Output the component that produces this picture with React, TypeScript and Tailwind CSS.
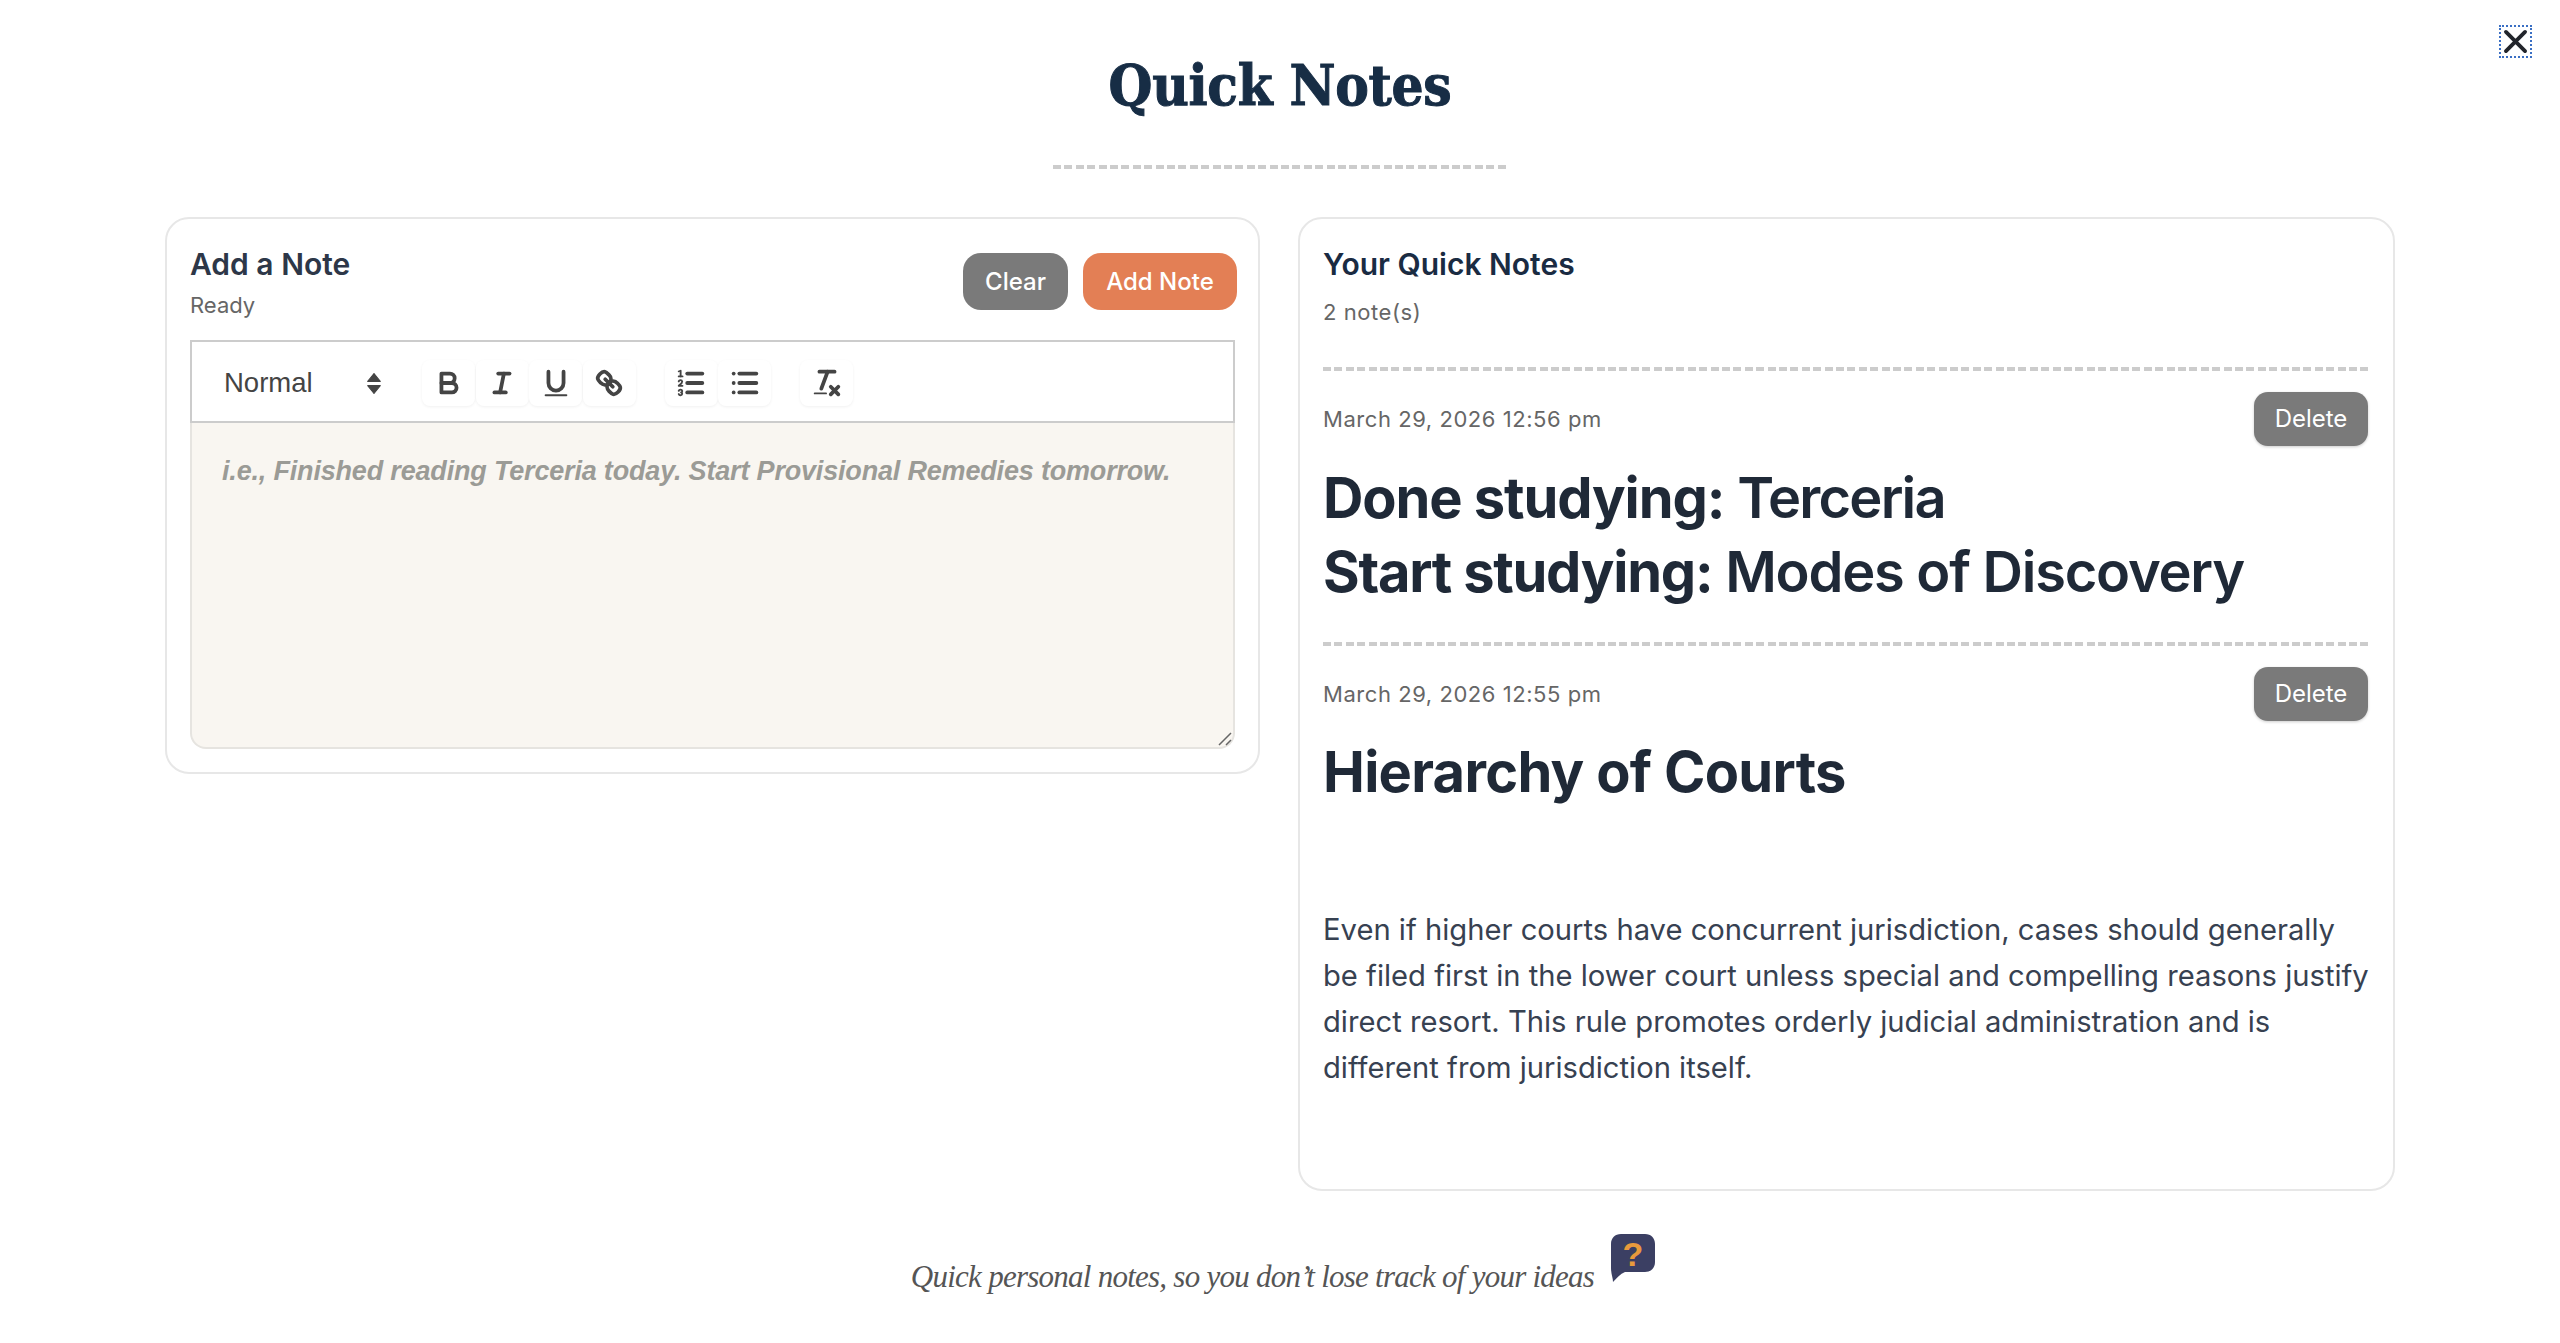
import React from "react";

const S = "fill-none stroke-[#444] stroke-2 [stroke-linecap:round] [stroke-linejoin:round]";
const T = "fill-none stroke-[#444] stroke-1 [stroke-linecap:round] [stroke-linejoin:round]";
const F = "fill-[#444]";

function Tool({ children }: { children: React.ReactNode }) {
  return (
    <button className="flex h-[46px] w-[53px] items-center justify-center rounded-lg bg-white shadow-[0_1px_3px_rgba(0,0,0,0.06)]">
      <svg viewBox="0 0 18 18" className="h-[34px] w-[34px]">{children}</svg>
    </button>
  );
}

function Dashes({ className }: { className?: string }) {
  return <div className={"h-[4px] bg-[repeating-linear-gradient(90deg,#cccccc_0,#cccccc_8px,transparent_8px,transparent_11.4px)] " + (className ?? "")} />;
}

function NoteHead({ date }: { date: string }) {
  return (
    <div className="flex items-center justify-between pr-[3px]">
      <span className="text-[22px] leading-none tracking-[0.55px] text-[#666]">{date}</span>
      <button className="h-[54px] w-[114px] rounded-[14px] bg-[#7a7a7a] text-[24px] text-white shadow-[0_1px_3px_rgba(0,0,0,0.2)]">Delete</button>
    </div>
  );
}

export default function App() {
  return (
    <div className="relative min-h-[1343px] bg-white px-[165px] pt-[52px] font-['Inter',sans-serif]">
      <button className="absolute left-[2499px] top-[25px] flex h-[33px] w-[33px] items-center justify-center border-2 border-dotted border-[#3a6fc4]">
        <svg viewBox="0 0 24 24" className="h-[27px] w-[27px]"><path d="M3.5 3.5 20.5 20.5M20.5 3.5 3.5 20.5" className="fill-none stroke-[#22252b] stroke-[3.4] [stroke-linecap:round]" /></svg>
      </button>

      <h1 className="text-center font-['DejaVu_Serif_Condensed','DejaVu_Serif',serif] text-[56px] font-bold leading-[67px] tracking-[-0.3px] text-[#172d45] [-webkit-text-stroke:1px_#172d45]">Quick Notes</h1>
      <Dashes className="mx-auto mt-[46px] w-[455px]" />

      <div className="mt-[48px] grid grid-cols-[1095px_1097px] items-start gap-[38px]">
        {/* Add a note */}
        <section className="rounded-[24px] border-2 border-[#e7e7e7] px-[23px] pb-[23px] pt-[27px]">
          <div className="flex h-[94px] items-start justify-between">
            <div className="pt-[1px]">
              <h2 className="text-[30px] font-semibold leading-[35px] text-[#2d3748]">Add a Note</h2>
              <p className="mt-[10px] text-[22px] leading-[27px] text-[#666]">Ready</p>
            </div>
            <div className="-mr-[2px] mt-[7px] flex gap-[15px]">
              <button className="h-[57px] w-[105px] rounded-[18px] bg-[#7a7a7a] text-[24px] font-medium text-white">Clear</button>
              <button className="h-[57px] w-[154px] rounded-[18px] bg-[#e37f55] text-[24px] font-medium text-white">Add Note</button>
            </div>
          </div>

          <div className="flex h-[83px] items-center border-2 border-[#cccccc] pt-[3px] font-['Liberation_Sans',sans-serif]">
            <div className="flex w-[230px] items-center justify-between pl-[32px] pr-[41px] text-[27.5px] text-[#444]">
              <span>Normal</span>
              <svg viewBox="0 0 13 20" className="h-[21px] w-[14px]"><path d="M6.5 0.5 12.5 8H0.5ZM6.5 19.5 0.5 12H12.5Z" className="fill-[#444] stroke-[#444] [stroke-linejoin:round]" /></svg>
            </div>
            <div className="flex gap-[0.5px]">
              <Tool>
                <path className={S} d="M5,4H9.5A2.5,2.5,0,0,1,12,6.5v0A2.5,2.5,0,0,1,9.5,9H5A0,0,0,0,1,5,9V4A0,0,0,0,1,5,4Z" />
                <path className={S} d="M5,9h5.5A2.5,2.5,0,0,1,13,11.5v0A2.5,2.5,0,0,1,10.5,14H5a0,0,0,0,1,0,0V9A0,0,0,0,1,5,9Z" />
              </Tool>
              <Tool>
                <line className={S} x1="7" x2="13" y1="4" y2="4" />
                <line className={S} x1="5" x2="11" y1="14" y2="14" />
                <line className={S} x1="8" x2="10" y1="14" y2="4" />
              </Tool>
              <Tool>
                <path className={S} d="M5,3V9a4.012,4.012,0,0,0,4,4H9a4.012,4.012,0,0,0,4-4V3" />
                <rect className={F} height="1" rx="0.5" ry="0.5" width="12" x="3" y="15" />
              </Tool>
              <Tool>
                <line className={S} x1="7" x2="11" y1="7" y2="11" />
                <path className={S} d="M8.9,4.577a3.476,3.476,0,0,1,.36,4.679A3.476,3.476,0,0,1,4.577,8.9C3.185,7.5,2.035,6.4,4.217,4.217S7.5,3.185,8.9,4.577Z" />
                <path className={S} d="M13.423,9.1a3.476,3.476,0,0,0-4.679-.36,3.476,3.476,0,0,0,.36,4.679c1.392,1.392,2.5,2.542,4.679.36S14.815,10.5,13.423,9.1Z" />
              </Tool>
            </div>
            <div className="ml-[29px] flex gap-[0.5px]">
              <Tool>
                <line className={S} x1="7" x2="15" y1="4" y2="4" />
                <line className={S} x1="7" x2="15" y1="9" y2="9" />
                <line className={S} x1="7" x2="15" y1="14" y2="14" />
                <line className={T} x1="2.5" x2="4.5" y1="5.5" y2="5.5" />
                <path className={F} d="M3.5,6A0.5,0.5,0,0,1,3,5.5V3.085l-0.276.138A0.5,0.5,0,0,1,2.053,3c-0.124-.247-0.023-0.324.224-0.447l1-.5A0.5,0.5,0,0,1,4,2.5v3A0.5,0.5,0,0,1,3.5,6Z" />
                <path className={T} d="M4.5,10.5h-2c0-.234,1.85-1.076,1.85-2.234A0.959,0.959,0,0,0,2.5,8.156" />
                <path className={T} d="M2.5,14.846a0.959,0.959,0,0,0,1.85-.109A0.7,0.7,0,0,0,3.75,14a0.688,0.688,0,0,0,.6-0.736,0.959,0.959,0,0,0-1.85-.109" />
              </Tool>
              <Tool>
                <line className={S} x1="6" x2="15" y1="4" y2="4" />
                <line className={S} x1="6" x2="15" y1="9" y2="9" />
                <line className={S} x1="6" x2="15" y1="14" y2="14" />
                <line className={S} x1="3" x2="3" y1="4" y2="4" />
                <line className={S} x1="3" x2="3" y1="9" y2="9" />
                <line className={S} x1="3" x2="3" y1="14" y2="14" />
              </Tool>
            </div>
            <div className="ml-[29px]">
              <Tool>
                <line className={S} x1="5" x2="13" y1="3" y2="3" />
                <line className={S} x1="6" x2="9.35" y1="12" y2="3" />
                <line className={S} x1="11" x2="15" y1="11" y2="15" />
                <line className={S} x1="15" x2="11" y1="11" y2="15" />
                <rect className={F} height="1" rx="0.5" ry="0.5" width="7" x="2" y="14" />
              </Tool>
            </div>
          </div>

          <div className="relative h-[326px] rounded-b-[16px] border-2 border-t-0 border-[#e6e4e0] bg-[#f9f6f1] px-[30px] pt-[30px]">
            <p className="font-['Liberation_Sans',sans-serif] text-[27px] font-bold italic leading-[36px] tracking-[-0.18px] text-[#9b9b96]">i.e., Finished reading Terceria today. Start Provisional Remedies tomorrow.</p>
            <svg viewBox="0 0 14 14" className="absolute bottom-[1px] right-[1px] h-[14px] w-[14px]"><path d="M1 13 13 1M8 13l5-5" className="fill-none stroke-[#666] stroke-[1.5]" /></svg>
          </div>
        </section>

        {/* Notes */}
        <section className="h-[974px] rounded-[24px] border-2 border-[#e7e7e7] pl-[23px] pr-[22px] pt-[28px]">
          <h2 className="text-[30px] font-semibold leading-[35px] text-[#1a2b42]">Your Quick Notes</h2>
          <p className="mt-[17px] text-[22px] leading-[27px] tracking-[0.55px] text-[#666]">2 note(s)</p>
          <Dashes className="mt-[41px]" />

          <div className="mt-[21px]">
            <NoteHead date="March 29, 2026 12:56 pm" />
            <h3 className="mt-[15px] text-[56px] font-semibold leading-[74px] tracking-[-1.25px] text-[#1f2937]">
              <strong className="font-bold tracking-[-1.1px]">Done studying:</strong> <span className="tracking-[-1.8px]">Terceria</span><br />
              <strong className="font-bold">Start studying:</strong> Modes of Discovery
            </h3>
          </div>

          <Dashes className="mt-[33px]" />

          <div className="mt-[21px]">
            <NoteHead date="March 29, 2026 12:55 pm" />
            <h3 className="mt-[14px] text-[56px] font-bold leading-[74px] tracking-[-0.7px] text-[#1f2937]">Hierarchy of Courts</h3>
            <p className="-mr-[5px] mt-[98px] text-[29.2px] leading-[46px] text-[#374151]">
              Even if higher courts have concurrent jurisdiction, cases should generally be filed first in the lower court unless special and compelling reasons justify direct resort. This rule promotes orderly judicial administration and is different from jurisdiction itself.
            </p>
          </div>
        </section>
      </div>

      <footer className="mt-[43px] flex items-start justify-center pl-[6px]">
        <p className="mt-[25px] font-['Liberation_Serif',serif] text-[31px] italic leading-[36px] tracking-[-0.75px] text-[#555]">Quick personal notes, so you don’t lose track of your ideas</p>
        <svg viewBox="0 0 44 48" className="ml-[17px] h-[48px] w-[44px]">
          <path d="M10 0H34C40 0 44 4 44 10V28C44 34 40 38 34 38H14C9 40 6 44 2 48C2 44 0 40 0 34V10C0 4 4 0 10 0Z" className="fill-[#3b3f63]" />
          <text x="22" y="32" textAnchor="middle" className="fill-[#e89a3c] font-['Liberation_Sans',sans-serif] text-[34px] font-bold">?</text>
        </svg>
      </footer>
    </div>
  );
}
